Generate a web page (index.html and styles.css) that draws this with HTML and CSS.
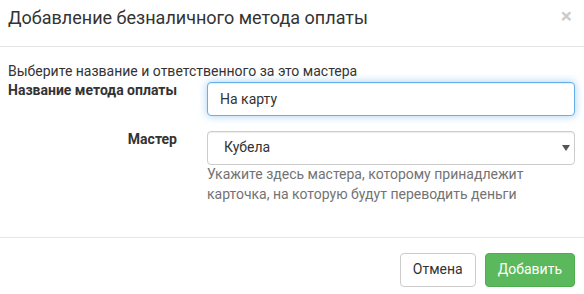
FILE: index.html
```html
<!DOCTYPE html>
<html lang="ru">
<head>
    <meta charset="UTF-8">
    <meta name="viewport" content="width=device-width, initial-scale=1.0">
    <title>Добавление безналичного метода оплаты</title>
    <link rel="stylesheet" href="styles.css">
</head>
<body>
    <div class="modal">
        <div class="modal-header">
            <h4 class="modal-title">Добавление безналичного метода оплаты</h4>
            <button type="button" class="close">&times;</button>
        </div>
        <div class="modal-body">
            <p class="intro">Выберите название и ответственного за это мастера</p>
            <form class="form">
                <div class="form-group">
                    <label class="control-label" for="name">Название метода оплаты</label>
                    <div class="control">
                        <input type="text" id="name" class="form-control focus" value="На карту">
                    </div>
                </div>
                <div class="form-group">
                    <label class="control-label" for="master">Мастер</label>
                    <div class="control">
                        <div class="select-wrap">
                            <select id="master" class="form-control select">
                                <option>Кубела</option>
                            </select>
                            <svg class="caret" width="8" height="6" viewBox="0 0 8 6"><path d="M0 0h8L4 6z" fill="#555"/></svg>
                        </div>
                        <p class="help-block">Укажите здесь мастера, которому принадлежит карточка, на которую будут переводить деньги</p>
                    </div>
                </div>
            </form>
        </div>
        <div class="modal-footer">
            <button type="button" class="btn btn-default">Отмена</button>
            <button type="button" class="btn btn-success">Добавить</button>
        </div>
    </div>
</body>
</html>
```

FILE: styles.css
```css
body { margin: 0; font-family: Roboto, "Liberation Sans", Arial, sans-serif; font-size: 14px; line-height: 1.42857; color: #333; background: #fff; }
.modal { width: 584px; }
.modal-header { display: flex; justify-content: space-between; align-items: flex-start; padding: 5px 9px 15px 8px; border-bottom: 1px solid #e5e5e5; }
.modal-title { margin: 0; font-size: 18px; font-weight: 400; line-height: 1.42857; }
.close { margin: 1px 3px 0 0; padding: 0; border: 0; background: none; font-family: inherit; font-size: 21px; font-weight: 700; line-height: 1; color: #000; opacity: .2; cursor: pointer; }
.modal-body { padding: 15px 9px 15px 8px; }
.intro { margin: 0; }
.form-group { display: grid; grid-template-columns: 169px 368px; column-gap: 30px; margin-bottom: 15px; }
.control-label { font-weight: 700; text-align: right; margin-top: -1px; }
.form-control { display: block; box-sizing: border-box; width: 100%; height: 34px; margin: 0; padding: 6px 12px; font-family: inherit; font-size: 14px; line-height: 1.42857; color: #555; background: #fff; border: 1px solid #ccc; border-radius: 4px; box-shadow: inset 0 1px 1px rgba(0, 0, 0, .075); outline: none; }
.form-control.focus { border-color: #66afe9; box-shadow: inset 0 1px 1px rgba(0, 0, 0, .075), 0 0 8px rgba(102, 175, 233, .6); color: #333; }
.select-wrap { position: relative; }
.select { appearance: none; -webkit-appearance: none; padding-left: 16px; color: #333; }
.caret { position: absolute; right: 5px; top: 14px; pointer-events: none; }
.help-block { margin: 0 0 2px; color: #737373; }
.modal-footer { display: flex; justify-content: flex-end; gap: 9px; padding: 15px 9px 15px 8px; border-top: 1px solid #e5e5e5; }
.btn { height: 34px; padding: 6px 12px; font-family: inherit; font-size: 14px; line-height: 1.42857; border: 1px solid transparent; border-radius: 4px; cursor: pointer; }
.btn-default { color: #333; background: #fff; border-color: #ccc; }
.btn-success { color: #fff; background: #5cb85c; border-color: #4cae4c; }
```
